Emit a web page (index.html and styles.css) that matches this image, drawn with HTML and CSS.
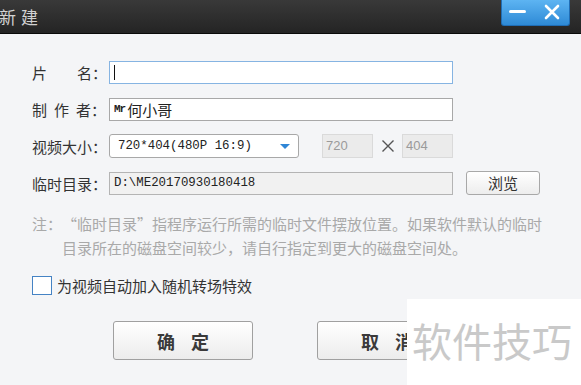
FILE: index.html
```html
<!DOCTYPE html>
<html lang="zh-CN">
<head>
    <meta charset="UTF-8">
    <meta name="viewport" content="width=device-width, initial-scale=1.0">
    <title>新建</title>
    <link rel="stylesheet" href="styles.css">
</head>
<body>
    <div class="window">
        <div class="titlebar">
            <span class="title">新建</span>
            <div class="winctl">
                <span class="btn-min"></span>
                <svg class="btn-close" width="16" height="16" viewBox="0 0 16 16">
                    <path d="M2 2 L14 14 M14 2 L2 14" stroke="#fff" stroke-width="2.6" stroke-linecap="round"/>
                </svg>
            </div>
        </div>

        <div class="content">
            <div class="row">
                <span class="lbl">片&emsp;&emsp;名：</span>
                <div class="field focused"><span class="caret"></span></div>
            </div>
            <div class="row">
                <span class="lbl"><span class="spaced">制作</span>者：</span>
                <div class="field"><span class="mono-b">Mr</span>何小哥</div>
            </div>
            <div class="row">
                <span class="lbl">视频大小：</span>
                <div class="select">
                    <span class="mono">720*404(480P 16:9)</span>
                    <span class="arrow"></span>
                </div>
                <div class="dim dim-w">720</div>
                <svg class="times" width="14" height="14" viewBox="0 0 14 14">
                    <path d="M1.5 1.5 L12.5 12.5 M12.5 1.5 L1.5 12.5" stroke="#555" stroke-width="1.4"/>
                </svg>
                <div class="dim">404</div>
            </div>
            <div class="row">
                <span class="lbl">临时目录：</span>
                <div class="field readonly"><span class="mono">D:\ME20170930180418</span></div>
                <div class="browse">浏览</div>
            </div>

            <div class="note">
                <span class="note-head">注：</span>
                <span class="note-text">“临时目录”指程序运行所需的临时文件摆放位置。如果软件默认的临时<br>目录所在的磁盘空间较少，请自行指定到更大的磁盘空间处。</span>
            </div>

            <label class="check">
                <span class="box"></span>
                为视频自动加入随机转场特效
            </label>

            <div class="actions">
                <div class="action-btn"><span>确</span><span>定</span></div>
                <div class="action-btn"><span>取</span><span>消</span></div>
            </div>
        </div>

        <div class="watermark">软件技巧</div>
    </div>
</body>
</html>
```

FILE: styles.css
```css
body {
    margin: 0;
    font-family: "Noto Sans CJK SC", "Noto Sans", sans-serif;
    background: #f4f5f7;
}
.window {
    position: relative;
    width: 581px;
    height: 385px;
    overflow: hidden;
    background: #f4f5f7;
}
.titlebar {
    display: flex;
    align-items: flex-start;
    height: 33px;
    background: linear-gradient(#393939, #242424);
    border-bottom: 1px solid #0a0a0a;
}
.title {
    margin-left: -1px;
    line-height: 33px;
    font-size: 17px;
    color: #d2d2d2;
    letter-spacing: 5px;
}
.winctl {
    display: flex;
    align-items: center;
    margin-left: auto;
    margin-right: 11px;
    width: 69px;
    height: 26px;
    box-sizing: border-box;
    padding-left: 7px;
    background: linear-gradient(#5db4f2, #2e8ad6);
    border: 1px solid #1f6db5;
    border-top: none;
    border-radius: 0 0 3px 3px;
}
.btn-min {
    width: 17px;
    height: 3px;
    border-radius: 2px;
    background: #fff;
    margin-top: -2px;
}
.btn-close {
    margin-left: 18px;
    margin-top: -1px;
}
.content {
    padding: 26px 0 0 32px;
}
.row {
    display: flex;
    align-items: center;
    height: 24px;
    margin-bottom: 13px;
}
.lbl {
    width: 77px;
    flex: none;
    font-size: 15px;
    color: #333;
    white-space: nowrap;
}
.spaced {
    letter-spacing: 7px;
}
.field {
    display: flex;
    align-items: center;
    box-sizing: border-box;
    width: 344px;
    height: 23px;
    padding-left: 4px;
    background: #fff;
    border: 1px solid #a8a8a8;
    font-size: 15px;
    color: #222;
}
.field.focused {
    border-color: #86b4e2;
}
.field.readonly {
    background: #f1f1f1;
    border-color: #b4b4b4;
}
.caret {
    width: 1px;
    height: 15px;
    background: #111;
}
.mono {
    font-family: "Liberation Mono", monospace;
    font-size: 12.4px;
    color: #222;
}
.mono-b {
    font-family: "Liberation Mono", monospace;
    font-size: 11px;
    font-weight: bold;
    letter-spacing: -1px;
    margin-right: 2px;
}
.select {
    display: flex;
    align-items: center;
    box-sizing: border-box;
    width: 190px;
    height: 24px;
    padding: 0 8px 0 8px;
    background: #fff;
    border: 1px solid #a8a8a8;
    border-radius: 3px;
}
.arrow {
    margin-left: auto;
    width: 0;
    height: 0;
    border-left: 5px solid transparent;
    border-right: 5px solid transparent;
    border-top: 5px solid #2f86d6;
}
.dim {
    box-sizing: border-box;
    width: 51px;
    height: 24px;
    padding-left: 3px;
    line-height: 22px;
    background: #ebebeb;
    border: 1px solid #dadada;
    font-family: "Liberation Sans", sans-serif;
    font-size: 13px;
    color: #9a9a9a;
}
.dim-w {
    margin-left: 23px;
}
.times {
    margin: 0 7px 0 8px;
}
.browse {
    box-sizing: border-box;
    width: 74px;
    height: 24px;
    margin-left: 13px;
    text-align: center;
    line-height: 22px;
    font-size: 15px;
    color: #333;
    background: linear-gradient(#ffffff, #ededed);
    border: 1px solid #a8a8a8;
    border-radius: 3px;
}
.note {
    display: flex;
    margin-top: 17px;
    font-size: 15px;
    line-height: 24px;
    color: #a9a9a9;
    white-space: nowrap;
}
.note-head {
    width: 30px;
    flex: none;
}
.check {
    display: flex;
    align-items: center;
    gap: 5px;
    margin-top: 15px;
    font-size: 15px;
    color: #333;
}
.box {
    box-sizing: border-box;
    width: 20px;
    height: 19px;
    background: #fff;
    border: 1.5px solid #4583c4;
}
.actions {
    display: flex;
    gap: 64px;
    margin-top: 25px;
    margin-left: 81px;
}
.action-btn {
    display: flex;
    justify-content: center;
    align-items: center;
    gap: 16px;
    box-sizing: border-box;
    width: 140px;
    height: 39px;
    font-size: 18px;
    font-weight: bold;
    color: #3a3a3a;
    background: linear-gradient(#ffffff, #ececec);
    border: 1px solid #a0a0a0;
    border-radius: 3px;
}
.watermark {
    position: absolute;
    left: 407px;
    top: 299px;
    right: 0;
    bottom: 0;
    padding: 20px 0 0 5px;
    background: #fff;
    font-size: 40px;
    line-height: 42px;
    color: #c9c9c9;
    white-space: nowrap;
}
```
